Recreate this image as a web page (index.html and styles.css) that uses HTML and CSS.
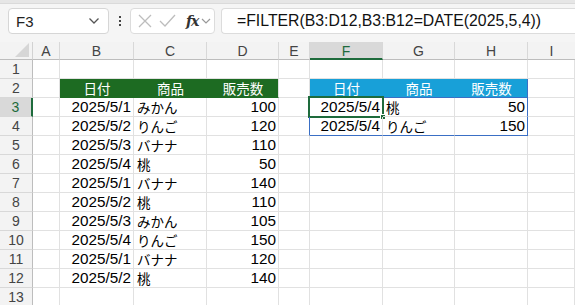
FILE: index.html
```html
<!DOCTYPE html>
<html lang="ja">
<head>
<meta charset="utf-8">
<link rel="stylesheet" href="styles.css">
</head>
<body>
<div class="app">
  <div class="topband"></div>
  <div class="fbar">
    <div class="namebox"><span class="ref">F3</span><svg class="chev" width="12" height="8" viewBox="0 0 12 8"><path d="M1.5 1.5 L6 6 L10.5 1.5" fill="none" stroke="#555" stroke-width="1.3"/></svg></div>
    <div class="vdots"><i></i><i></i><i></i></div>
    <div class="fbtns">
      <svg width="18" height="18" viewBox="0 0 18 18"><path d="M3 3 L15 15 M15 3 L3 15" stroke="#bdbdbd" stroke-width="1.3" fill="none"/></svg>
      <svg width="20" height="18" viewBox="0 0 20 18"><path d="M3 9 L8 14 L18 3" stroke="#bdbdbd" stroke-width="1.3" fill="none"/></svg>
      <span class="fx">fx</span>
      <svg width="10" height="8" viewBox="0 0 10 8"><path d="M1 2 L5 6 L9 2" fill="none" stroke="#999" stroke-width="1.2"/></svg>
    </div>
    <div class="formula">=FILTER(B3:D12,B3:B12=DATE(2025,5,4))</div>
  </div>
  <div class="sheet">
    <div class="corner"><svg width="14" height="14" viewBox="0 0 14 14"><path d="M14 0 L14 14 L0 14 Z" fill="#d6d6d6"/></svg></div>
    <div class="ch">A</div><div class="ch">B</div><div class="ch">C</div><div class="ch">D</div><div class="ch">E</div><div class="ch sel">F</div><div class="ch">G</div><div class="ch">H</div><div class="ch last">I</div>

    <div class="rh">1</div><div class="c"></div><div class="c"></div><div class="c"></div><div class="c"></div><div class="c"></div><div class="c"></div><div class="c"></div><div class="c"></div><div class="c"></div>

    <div class="rh">2</div><div class="c"></div><div class="c gh ja">日付</div><div class="c gh ja">商品</div><div class="c gh ghl ja">販売数</div><div class="c"></div><div class="c bh ja">日付</div><div class="c bh ja">商品</div><div class="c bh bhl ja">販売数</div><div class="c"></div>

    <div class="rh rsel">3</div><div class="c"></div><div class="c r">2025/5/1</div><div class="c ja">みかん</div><div class="c r">100</div><div class="c tl"></div><div class="c r active">2025/5/4<span class="sel-box"></span><span class="handle"></span></div><div class="c ja">桃</div><div class="c r tr">50</div><div class="c"></div>

    <div class="rh">4</div><div class="c"></div><div class="c r">2025/5/2</div><div class="c ja">りんご</div><div class="c r">120</div><div class="c tl"></div><div class="c r tb">2025/5/4</div><div class="c tb ja">りんご</div><div class="c r tr tb">150</div><div class="c"></div>

    <div class="rh">5</div><div class="c"></div><div class="c r">2025/5/3</div><div class="c ja">バナナ</div><div class="c r">110</div><div class="c"></div><div class="c"></div><div class="c"></div><div class="c"></div><div class="c"></div>

    <div class="rh">6</div><div class="c"></div><div class="c r">2025/5/4</div><div class="c ja">桃</div><div class="c r">50</div><div class="c"></div><div class="c"></div><div class="c"></div><div class="c"></div><div class="c"></div>

    <div class="rh">7</div><div class="c"></div><div class="c r">2025/5/1</div><div class="c ja">バナナ</div><div class="c r">140</div><div class="c"></div><div class="c"></div><div class="c"></div><div class="c"></div><div class="c"></div>

    <div class="rh">8</div><div class="c"></div><div class="c r">2025/5/2</div><div class="c ja">桃</div><div class="c r">110</div><div class="c"></div><div class="c"></div><div class="c"></div><div class="c"></div><div class="c"></div>

    <div class="rh">9</div><div class="c"></div><div class="c r">2025/5/3</div><div class="c ja">みかん</div><div class="c r">105</div><div class="c"></div><div class="c"></div><div class="c"></div><div class="c"></div><div class="c"></div>

    <div class="rh">10</div><div class="c"></div><div class="c r">2025/5/4</div><div class="c ja">りんご</div><div class="c r">150</div><div class="c"></div><div class="c"></div><div class="c"></div><div class="c"></div><div class="c"></div>

    <div class="rh">11</div><div class="c"></div><div class="c r">2025/5/1</div><div class="c ja">バナナ</div><div class="c r">120</div><div class="c"></div><div class="c"></div><div class="c"></div><div class="c"></div><div class="c"></div>

    <div class="rh">12</div><div class="c"></div><div class="c r">2025/5/2</div><div class="c ja">桃</div><div class="c r">140</div><div class="c"></div><div class="c"></div><div class="c"></div><div class="c"></div><div class="c"></div>

    <div class="rh">13</div><div class="c"></div><div class="c"></div><div class="c"></div><div class="c"></div><div class="c"></div><div class="c"></div><div class="c"></div><div class="c"></div><div class="c"></div>
  </div>
</div>
</body>
</html>
```

FILE: styles.css
```css
* { box-sizing: border-box; }
html, body { margin: 0; padding: 0; }
body {
  width: 575px;
  height: 305px;
  overflow: hidden;
  background: #ffffff;
  font-family: "Liberation Sans", "Noto Sans CJK JP", sans-serif;
  color: #000;
}
.app { width: 575px; }
.topband {
  height: 4px;
  background: #e6e6e6;
  border-bottom: 1px solid #dadada;
}
.fbar {
  height: 38px;
  background: #f5f5f5;
  display: flex;
  align-items: flex-start;
  padding: 4px 0 0 8px;
}
.namebox {
  width: 101px;
  height: 26px;
  background: #fff;
  border: 1px solid #d6d6d6;
  border-radius: 4px;
  display: flex;
  align-items: center;
  justify-content: space-between;
  padding: 0 8px 0 7px;
}
.ref { font-size: 15px; color: #222; }
.vdots {
  width: 21px;
  height: 26px;
  display: flex;
  flex-direction: column;
  align-items: center;
  justify-content: center;
  gap: 2px;
}
.vdots i { display: block; width: 2px; height: 2px; background: #444; }
.fbtns {
  width: 85px;
  height: 26px;
  background: #fff;
  border: 1px solid #dcdcdc;
  border-radius: 4px;
  display: flex;
  align-items: center;
  padding: 0 0 0 5px;
  gap: 3px;
}
.fx {
  font-family: "DejaVu Serif", "Liberation Serif", serif;
  font-style: italic;
  font-weight: bold;
  font-size: 14px;
  color: #333;
  margin-left: 6px;
  letter-spacing: -1px;
}
.formula {
  margin-left: 6px;
  flex: 1;
  height: 26px;
  background: #fff;
  border: 1px solid #dcdcdc;
  border-right: none;
  border-radius: 4px 0 0 4px;
  font-size: 15.8px;
  color: #111;
  padding-left: 15px;
  line-height: 24px;
  white-space: nowrap;
}
.sheet {
  display: grid;
  grid-template-columns: 33px 27px 74px 73px 72px 31px 73px 72px 73px 47px;
  grid-template-rows: 18px repeat(13, 19px);
  font-size: 15.3px;
}
.corner, .ch, .rh {
  background: #f3f3f3;
  color: #444;
  font-size: 14px;
}
.corner {
  border-right: 1px solid #d2d2d2;
  border-bottom: 1px solid #bdbdbd;
  display: flex;
  align-items: flex-end;
  justify-content: flex-end;
  padding: 0 3px 2px 0;
}
.ch {
  border-right: 1px solid #d8d8d8;
  border-bottom: 1px solid #bdbdbd;
  display: flex;
  align-items: center;
  justify-content: center;
  padding-top: 1px;
}
.ch.last { border-right: none; }
.ch.sel {
  background: #d9d9d9;
  color: #1e6b3c;
  border-bottom: 2px solid #1e6b3c;
}
.rh {
  border-right: 1px solid #bdbdbd;
  border-bottom: 1px solid #d8d8d8;
  display: flex;
  align-items: center;
  justify-content: center;
}
.rh.rsel {
  background: #d9d9d9;
  color: #1e6b3c;
  border-right: 2px solid #1e6b3c;
}
.c {
  border-right: 1px solid #e1e1e1;
  border-bottom: 1px solid #e1e1e1;
  display: flex;
  align-items: center;
  padding: 0 2px;
  white-space: nowrap;
  position: relative;
}
.c.r { justify-content: flex-end; }
.ja {
  font-family: "Noto Sans CJK JP", sans-serif;
  font-size: 13.5px;
  font-weight: 400;
  padding-left: 3px;
}
.gh {
  background: #1d6b22;
  color: #fff;
  border-right-color: #1d6b22;
  border-bottom-color: #1d6b22;
  justify-content: center;
}
.ghl { border-right-color: #e1e1e1; }
.bh {
  background: #18a0d8;
  color: #fff;
  border-right-color: #18a0d8;
  border-bottom-color: #3a6fc5;
  justify-content: center;
}
.bhl { border-right-color: #3a6fc5; }
.tl { border-right-color: #3a6fc5; }
.tr { border-right-color: #3a6fc5; }
.tb { border-bottom-color: #3a6fc5; }
.sel-box {
  position: absolute;
  left: -2px;
  top: -2px;
  right: -2px;
  bottom: -2px;
  border: 2px solid #1e6b3c;
  pointer-events: none;
}
.handle {
  position: absolute;
  right: -4px;
  bottom: -4px;
  width: 6px;
  height: 6px;
  background: #1e6b3c;
  border: 1px solid #fff;
}
```
